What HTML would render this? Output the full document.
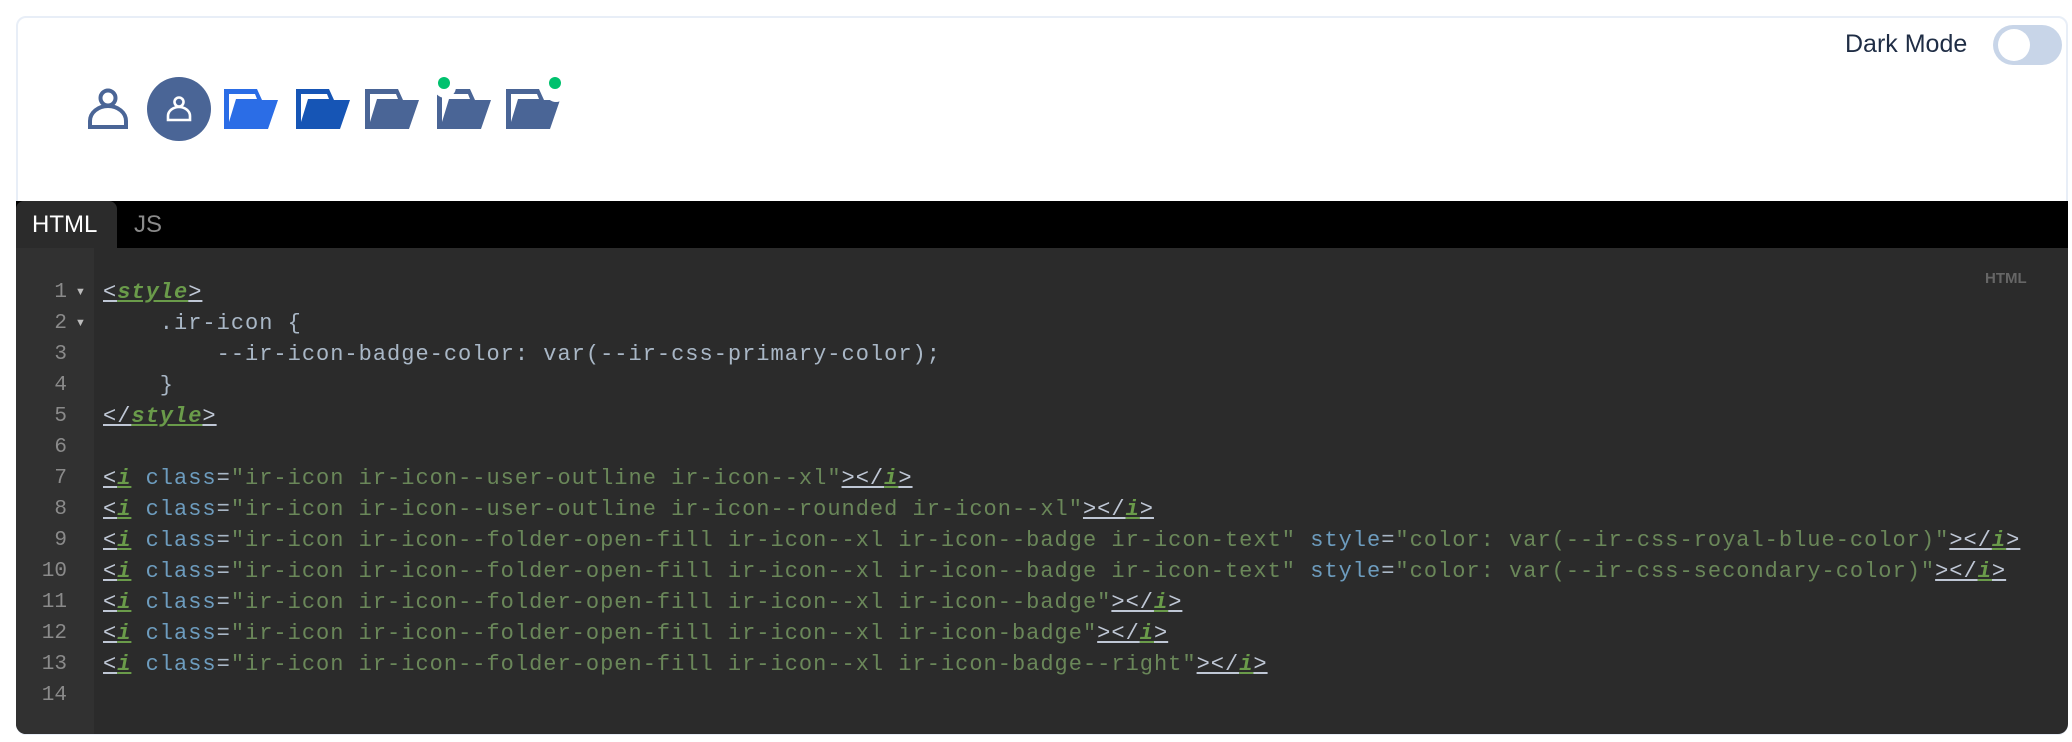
<!DOCTYPE html>
<html><head><meta charset="utf-8"><style>
*{margin:0;padding:0;box-sizing:border-box}
body{width:2072px;height:742px;background:#fff;position:relative;overflow:hidden;font-family:"Liberation Sans",sans-serif}
.card{position:absolute;left:16px;top:16px;width:2052px;height:719px;border:2px solid #e8eef7;border-radius:10px;overflow:hidden;background:#fff}
.dm{position:absolute;left:1845px;top:30px;font-size:25px;color:#1f2d45}
.tog{position:absolute;left:1993px;top:25px;width:69px;height:40px;border-radius:20px;background:#c8d5e8}
.tog:after{content:"";position:absolute;left:5px;top:4px;width:32px;height:32px;border-radius:50%;background:#fff}
.ic{position:absolute}
.tabs{position:absolute;left:16px;top:201px;width:2052px;height:47px;background:#000}
.tab{position:absolute;top:0;height:47px;font-size:24px;line-height:47px}
.ed{position:absolute;left:16px;top:248px;width:2052px;height:486px;background:#2b2b2b;border-radius:0 0 10px 10px}
.gut{position:absolute;left:0;top:0;width:78px;height:486px;background:#313131;border-radius:0 0 0 10px}
.ln{position:absolute;width:51px;text-align:right;font-family:"Liberation Mono",monospace;font-size:21px;color:#8a8a8a;line-height:31px}
.ar{position:absolute;left:59px;font-size:11px;color:#bbb;line-height:31px}
.code{position:absolute;left:87px;top:29px;font-family:"Liberation Mono",monospace;font-size:22px;letter-spacing:1px;line-height:31px;color:#a9b7c6;white-space:pre}
.t{color:#bfc7d5;text-decoration:underline}
.tn{color:#6a9b4a;font-style:italic;font-weight:bold;text-decoration:underline}
.a{color:#6d9cbe}
.s{color:#6a8759}
.lbl{position:absolute;left:1969px;top:22px;font-size:15px;font-weight:bold;color:#666}
</style></head><body>
<div class="card"></div>
<div class="dm">Dark Mode</div>
<div class="tog"></div>

<svg class="ic" style="left:87px;top:88px" width="42" height="41" viewBox="0 0 42 41"><circle cx="21" cy="10" r="7.5" fill="none" stroke="#4a6596" stroke-width="4"/><path d="M3 39 V33 A18 15 0 0 1 39 33 V39 Z" fill="none" stroke="#4a6596" stroke-width="4"/></svg>
<svg class="ic" style="left:147px;top:77px" width="64" height="64" viewBox="0 0 64 64"><circle cx="32" cy="32" r="32" fill="#4a6596"/><circle cx="32" cy="25" r="4.5" fill="none" stroke="#fff" stroke-width="2.6"/><path d="M21 43 V39 A11 9 0 0 1 43 39 V43 Z" fill="none" stroke="#fff" stroke-width="2.6"/></svg>

<svg class="ic" style="left:224px;top:89px" width="54" height="40" viewBox="0 0 54 40"><path fill-rule="evenodd" d="M0 0 H33 L38 11 H54 L44 40 H0 Z M5 5 H31 L33 10 H12 L5 33 Z" fill="#2b6de6"/></svg>
<svg class="ic" style="left:296px;top:89px" width="54" height="40" viewBox="0 0 54 40"><path fill-rule="evenodd" d="M0 0 H33 L38 11 H54 L44 40 H0 Z M5 5 H31 L33 10 H12 L5 33 Z" fill="#1655b5"/></svg>
<svg class="ic" style="left:365px;top:89px" width="54" height="40" viewBox="0 0 54 40"><path fill-rule="evenodd" d="M0 0 H33 L38 11 H54 L44 40 H0 Z M5 5 H31 L33 10 H12 L5 33 Z" fill="#4a6596"/></svg>
<svg class="ic" style="left:428px;top:76px" width="64" height="54" viewBox="-9 -13 64 54"><path fill-rule="evenodd" d="M0 0 H33 L38 11 H54 L44 40 H0 Z M5 5 H31 L33 10 H12 L5 33 Z" fill="#4a6596"/><circle cx="8" cy="-2" r="11" fill="#fff"/><circle cx="7" cy="-6" r="6" fill="#00c16e"/></svg>
<svg class="ic" style="left:506px;top:76px" width="64" height="54" viewBox="0 -13 64 54"><path fill-rule="evenodd" d="M0 0 H33 L38 11 H54 L44 40 H0 Z M5 5 H31 L33 10 H12 L5 33 Z" fill="#4a6596"/><circle cx="50" cy="3" r="10" fill="#fff"/><circle cx="49" cy="-6" r="6" fill="#00c16e"/></svg>

<div class="tabs"><div class="tab" style="left:0;width:101px;background:#2b2b2b;color:#fff;padding-left:16px;border-radius:8px 8px 0 0">HTML</div><div class="tab" style="left:118px;color:#8a8a8a">JS</div></div>

<div class="ed"><div class="gut"></div>
<div class="lbl">HTML</div>
<div class="ln" style="top:29px;left:0">1<br>2<br>3<br>4<br>5<br>6<br>7<br>8<br>9<br>10<br>11<br>12<br>13<br>14</div>
<div class="ar" style="top:29px">▼</div><div class="ar" style="top:60px">▼</div>
<div class="code"><span class="t">&lt;</span><span class="tn">style</span><span class="t">&gt;</span>
    .ir-icon {
        --ir-icon-badge-color: var(--ir-css-primary-color);
    }
<span class="t">&lt;/</span><span class="tn">style</span><span class="t">&gt;</span>

<span class="t">&lt;</span><span class="tn">i</span> <span class="a">class</span>=<span class="s">"ir-icon ir-icon--user-outline ir-icon--xl"</span><span class="t">&gt;&lt;/</span><span class="tn">i</span><span class="t">&gt;</span>
<span class="t">&lt;</span><span class="tn">i</span> <span class="a">class</span>=<span class="s">"ir-icon ir-icon--user-outline ir-icon--rounded ir-icon--xl"</span><span class="t">&gt;&lt;/</span><span class="tn">i</span><span class="t">&gt;</span>
<span class="t">&lt;</span><span class="tn">i</span> <span class="a">class</span>=<span class="s">"ir-icon ir-icon--folder-open-fill ir-icon--xl ir-icon--badge ir-icon-text"</span> <span class="a">style</span>=<span class="s">"color: var(--ir-css-royal-blue-color)"</span><span class="t">&gt;&lt;/</span><span class="tn">i</span><span class="t">&gt;</span>
<span class="t">&lt;</span><span class="tn">i</span> <span class="a">class</span>=<span class="s">"ir-icon ir-icon--folder-open-fill ir-icon--xl ir-icon--badge ir-icon-text"</span> <span class="a">style</span>=<span class="s">"color: var(--ir-css-secondary-color)"</span><span class="t">&gt;&lt;/</span><span class="tn">i</span><span class="t">&gt;</span>
<span class="t">&lt;</span><span class="tn">i</span> <span class="a">class</span>=<span class="s">"ir-icon ir-icon--folder-open-fill ir-icon--xl ir-icon--badge"</span><span class="t">&gt;&lt;/</span><span class="tn">i</span><span class="t">&gt;</span>
<span class="t">&lt;</span><span class="tn">i</span> <span class="a">class</span>=<span class="s">"ir-icon ir-icon--folder-open-fill ir-icon--xl ir-icon-badge"</span><span class="t">&gt;&lt;/</span><span class="tn">i</span><span class="t">&gt;</span>
<span class="t">&lt;</span><span class="tn">i</span> <span class="a">class</span>=<span class="s">"ir-icon ir-icon--folder-open-fill ir-icon--xl ir-icon-badge--right"</span><span class="t">&gt;&lt;/</span><span class="tn">i</span><span class="t">&gt;</span>
</div></div>
</body></html>
